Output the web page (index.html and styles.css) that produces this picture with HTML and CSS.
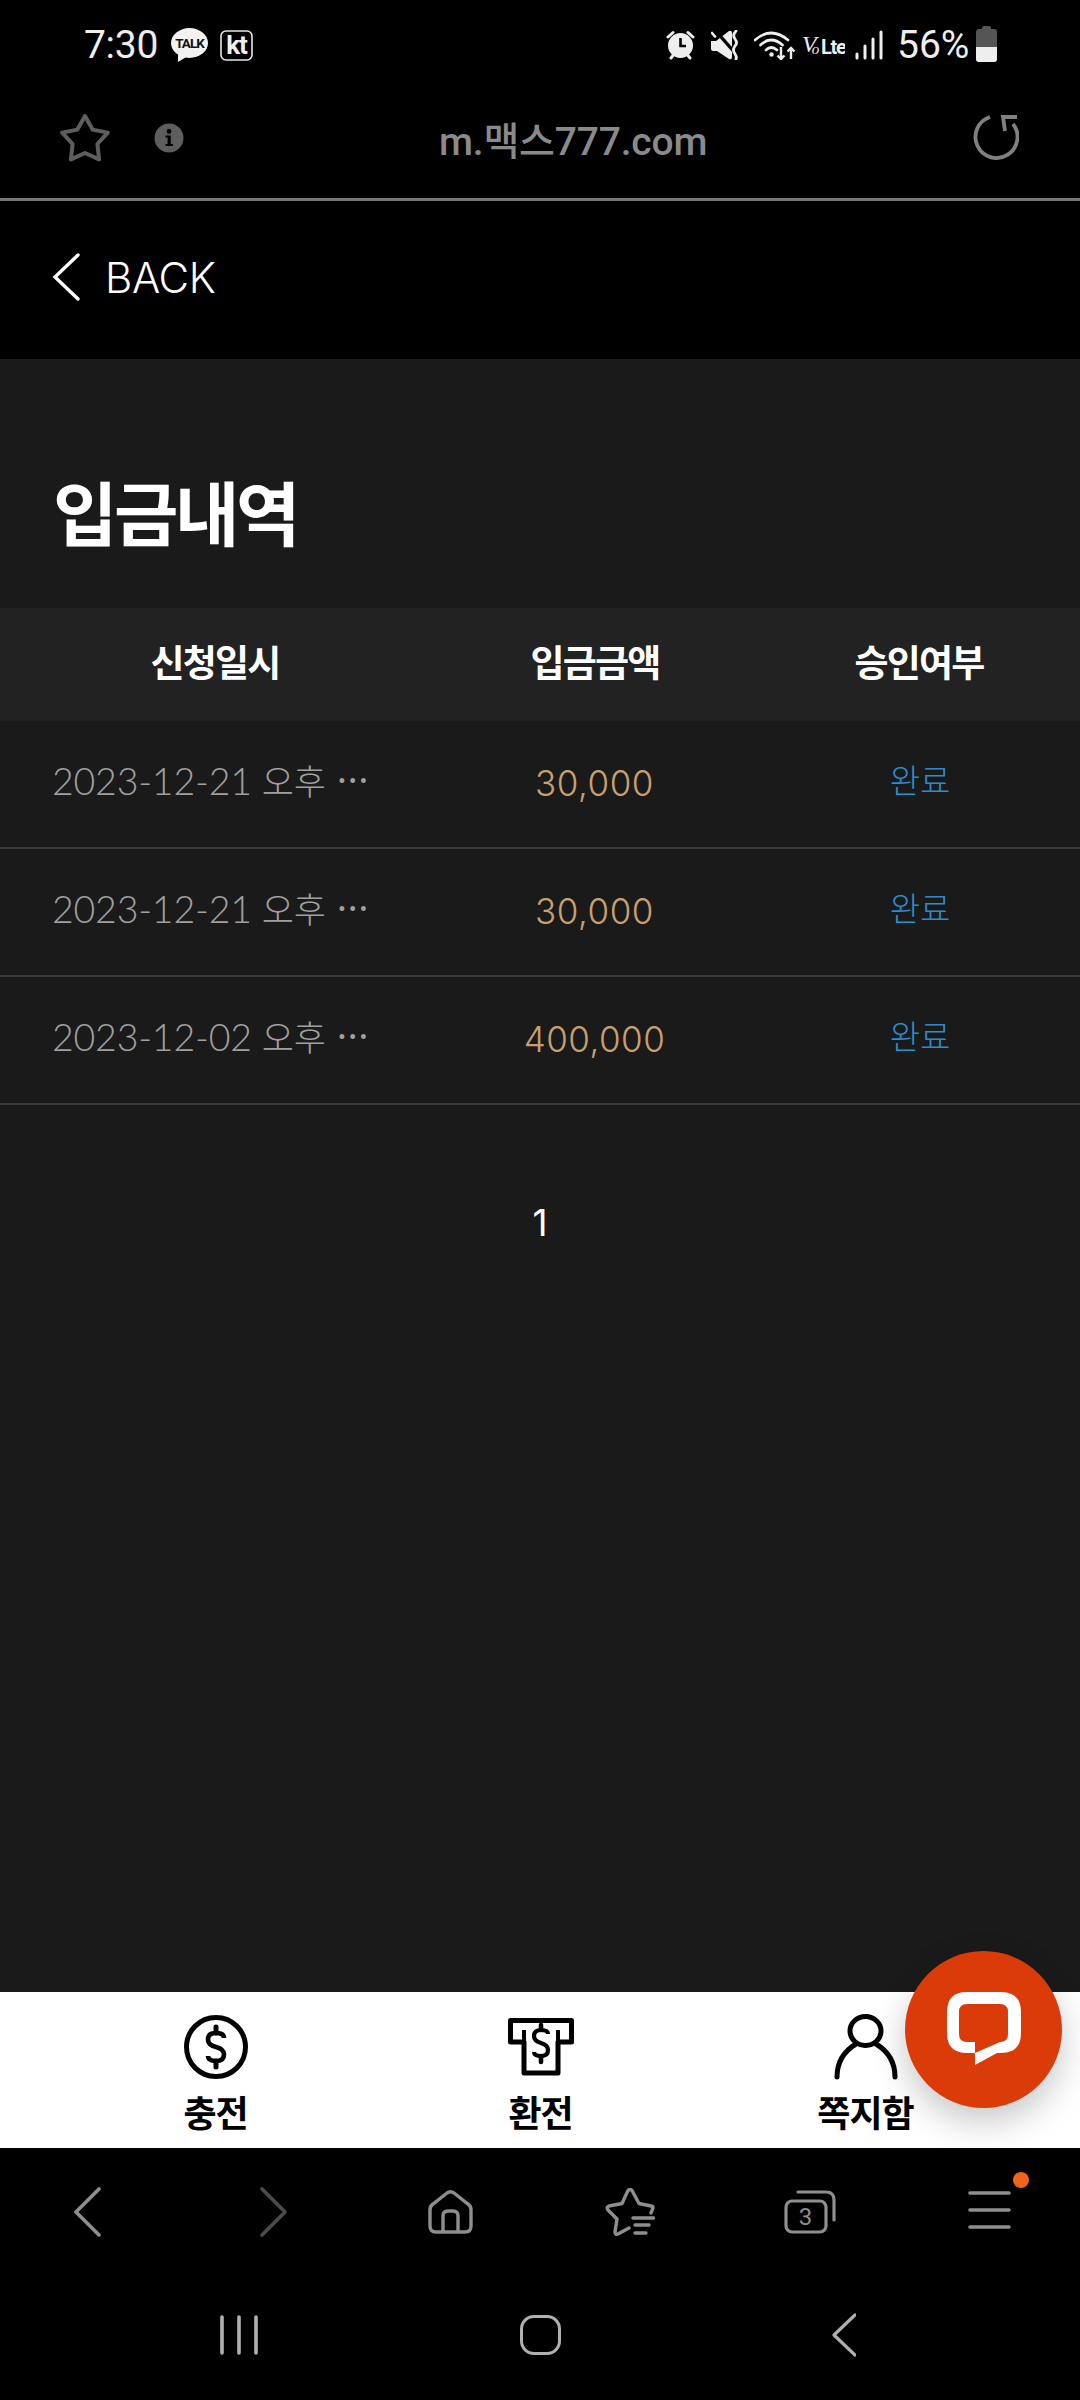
FILE: index.html
```html
<!DOCTYPE html>
<html lang="ko">
<head>
    <meta charset="UTF-8">
    <meta name="viewport" content="width=device-width, initial-scale=1.0">
    <title>입금내역</title>
    <link rel="stylesheet" href="styles.css">
</head>
<body>
<div class="page">

    <!-- phone status bar -->
    <div class="status">
        <span class="clock">7:30</span>
        <svg class="ic-talk" width="37" height="34" viewBox="0 0 37 34">
            <ellipse cx="18.5" cy="15" rx="18.5" ry="15" fill="#f2f2f2"/>
            <path d="M7 25 L7 34 L17 28 Z" fill="#f2f2f2"/>
            <text x="18.5" y="20" text-anchor="middle" class="talk-txt">TALK</text>
        </svg>
        <svg class="ic-kt" width="33" height="31" viewBox="0 0 33 31">
            <rect x="1" y="1" width="31" height="29" rx="5" fill="none" stroke="#e8e8e8" stroke-width="1.6"/>
            <text x="16.5" y="24" text-anchor="middle" class="kt-txt">kt</text>
        </svg>
        <div class="status-right">
            <svg width="29" height="30" viewBox="0 0 29 30">
                <circle cx="14.5" cy="15.5" r="12.5" fill="#eee"/>
                <path d="M14.5 8 V16 H20" fill="none" stroke="#000" stroke-width="2.6"/>
                <path d="M2 7 L7 2.5 M27 7 L22 2.5 M5 28 L7 25.5 M24 28 L22 25.5" stroke="#eee" stroke-width="3" stroke-linecap="round"/>
            </svg>
            <svg class="ic-mute" width="29" height="30" viewBox="0 0 29 30">
                <path d="M0 11 H5 L18 1 Q21 0 21 3 V27 Q21 30 18 29 L6 21 H2 Q0 21 0 19 Z" fill="#eee"/>
                <path d="M3 -1 L25 24" stroke="#000" stroke-width="3.4"/>
                <path d="M1 3 L4 6.5" stroke="#eee" stroke-width="2.6" stroke-linecap="round"/>
                <path d="M25 1 Q21 5 24 9 Q27 13 24 16 Q21 20 24 24 Q26 27 25 29" fill="none" stroke="#eee" stroke-width="2.8" stroke-linecap="round"/>
            </svg>
            <svg class="ic-wifi" width="42" height="30" viewBox="0 0 42 30">
                <path d="M1 10 Q17 -4 34 10 M6.5 15 Q17 5 28.5 15 M12 20 Q17 15 23 20" fill="none" stroke="#eee" stroke-width="2.7" stroke-linecap="round"/>
                <circle cx="17.5" cy="24.5" r="2.2" fill="#eee"/>
                <path d="M27 17 V29 M23.5 25.5 L27 29 L30.5 25.5 M37 29 V18 M33.5 21.5 L37 18 L40.5 21.5" fill="none" stroke="#eee" stroke-width="2.4"/>
            </svg>
            <svg class="ic-volte" width="43" height="34" viewBox="0 0 43 34">
                <text x="0" y="24" class="vo-txt">V<tspan class="vo-small" dx="-5" dy="2">o</tspan><tspan class="lte-txt" x="19">Lte</tspan></text>
            </svg>
            <svg class="ic-signal" width="28" height="30" viewBox="0 0 28 30">
                <path d="M2 28 V24 M10 28 V16 M18 28 V9 M26 28 V2" stroke="#eee" stroke-width="3" stroke-linecap="round"/>
            </svg>
            <span class="battery-pct">56%</span>
            <div class="battery"><div class="battery-level"></div></div>
        </div>
    </div>

    <!-- browser url bar -->
    <div class="urlbar">
        <svg class="ic-star" width="50" height="50" viewBox="0 0 50 50">
            <path d="M25 3 L32.6 16.6 L47.8 19.6 L37.4 31 L39.1 46.4 L25 40 L10.9 46.4 L12.6 31 L2.2 19.6 L17.4 16.6 Z" fill="none" stroke="#5e5e5e" stroke-width="4" stroke-linejoin="round"/>
        </svg>
        <svg class="ic-info" width="30" height="30" viewBox="0 0 30 30">
            <circle cx="15" cy="15" r="14.5" fill="#5e5e5e"/>
            <circle cx="15" cy="8.5" r="2.4" fill="#000"/>
            <path d="M11.5 12.5 H16.8 V21 H19 V23 H11.5 V21 H13.6 V14.5 H11.5 Z" fill="#000"/>
        </svg>
        <span class="url">m.맥스777.com</span>
        <svg class="ic-reload" width="47" height="46" viewBox="0 0 47 46">
            <path d="M18 2 A21 21 0 1 0 41 9" fill="none" stroke="#808080" stroke-width="3.8"/>
            <path d="M45 2 H31 L33 16" fill="none" stroke="#808080" stroke-width="3.8"/>
        </svg>
    </div>

    <div class="backbar">
        <svg width="28" height="48" viewBox="0 0 28 48">
            <path d="M26 2 L3 24 L26 46" fill="none" stroke="#fff" stroke-width="3.4" stroke-linecap="round"/>
        </svg>
        <span class="back-label">BACK</span>
    </div>

    <div class="content">
        <h1 class="title">입금내역</h1>

        <table class="history">
            <thead>
                <tr>
                    <th class="col-date">신청일시</th>
                    <th class="col-amount">입금금액</th>
                    <th class="col-state">승인여부</th>
                </tr>
            </thead>
            <tbody>
                <tr>
                    <td class="date">2023-12-21 <span class="ko">오후</span> <span class="more">···</span></td>
                    <td class="amount">30,000</td>
                    <td class="state">완료</td>
                </tr>
                <tr>
                    <td class="date">2023-12-21 <span class="ko">오후</span> <span class="more">···</span></td>
                    <td class="amount">30,000</td>
                    <td class="state">완료</td>
                </tr>
                <tr>
                    <td class="date">2023-12-02 <span class="ko">오후</span> <span class="more">···</span></td>
                    <td class="amount">400,000</td>
                    <td class="state">완료</td>
                </tr>
            </tbody>
        </table>

        <div class="pager">1</div>
    </div>

    <!-- site bottom menu -->
    <div class="tabbar">
        <div class="tab">
            <svg width="66" height="66" viewBox="0 0 66 66">
                <circle cx="33" cy="33" r="29.5" fill="none" stroke="#000" stroke-width="5"/>
                <path d="M41 24 Q41 19 33 19 Q25 19 25 25.5 Q25 31 33 33 Q41 35 41 40.5 Q41 47 33 47 Q25 47 25 42" fill="none" stroke="#000" stroke-width="4.6"/>
                <path d="M33 13 V19 M33 47 V53" stroke="#000" stroke-width="5" stroke-linecap="round"/>
            </svg>
            <span class="tab-label">충전</span>
        </div>
        <div class="tab">
            <svg class="ic-atm" width="66" height="60" viewBox="0 0 66 60">
                <path d="M2.5 2.5 H63.5 V24 H50 V55 H16 V24 H2.5 Z" fill="none" stroke="#000" stroke-width="5" stroke-linejoin="round"/>
                <path d="M16 12 V24 M50 12 V24" stroke="#000" stroke-width="4"/>
                <path d="M40 16 Q40 12 33 12 Q26 12 26 18 Q26 23 33 25 Q40 27 40 32 Q40 38 33 38 Q26 38 26 34" fill="none" stroke="#000" stroke-width="4.2"/>
                <path d="M33 7 V12 M33 38 V44" stroke="#000" stroke-width="4.6" stroke-linecap="round"/>
            </svg>
            <span class="tab-label">환전</span>
        </div>
        <div class="tab">
            <svg width="68" height="66" viewBox="0 0 68 66">
                <ellipse cx="33.5" cy="17" rx="15.5" ry="14.5" fill="none" stroke="#000" stroke-width="5"/>
                <path d="M5 63 C5 46 14 36 24 30 M63 63 C63 46 54 36 44 30" fill="none" stroke="#000" stroke-width="5" stroke-linecap="round"/>
            </svg>
            <span class="tab-label">쪽지함</span>
        </div>
    </div>

    <!-- browser toolbar -->
    <div class="toolbar">
        <svg width="50" height="50" viewBox="0 0 50 50">
            <path d="M34 2 L11 25 L34 48" fill="none" stroke="#8e8e8e" stroke-width="3.6" stroke-linecap="round" stroke-linejoin="round"/>
        </svg>
        <svg width="50" height="50" viewBox="0 0 50 50">
            <path d="M17 2 L40 25 L17 48" fill="none" stroke="#4c4c4c" stroke-width="3.6" stroke-linecap="round" stroke-linejoin="round"/>
        </svg>
        <svg width="45" height="44" viewBox="0 0 45 44">
            <path d="M2 36 V20 Q2 16 5 14 L19 3 Q22.5 0.5 26 3 L40 14 Q43 16 43 20 V36 Q43 42 37 42 H8 Q2 42 2 36 Z" fill="none" stroke="#8e8e8e" stroke-width="3.4"/>
            <path d="M15 42 V26 Q15 21 20 21 H25 Q30 21 30 26 V42" fill="none" stroke="#8e8e8e" stroke-width="3.4"/>
        </svg>
        <svg width="50" height="48" viewBox="0 0 50 48">
            <path d="M46 25 L48 20 Q48 18 46 18 L34 15.5 L27 2.5 Q25 0.5 23 2.5 L17 15.5 L4 18 Q1 19 3 22 L12 31 L10 44 Q10 47 13 46 L24 40" fill="none" stroke="#8e8e8e" stroke-width="3.4" stroke-linecap="round" stroke-linejoin="round"/>
            <path d="M28 30 H48.5 M30 37 H44 M30 45 H41" stroke="#8e8e8e" stroke-width="3.4" stroke-linecap="round"/>
        </svg>
        <svg width="52" height="44" viewBox="0 0 52 44">
            <rect x="2" y="11" width="40" height="31" rx="6" fill="none" stroke="#8e8e8e" stroke-width="3.2"/>
            <path d="M14 2 H42 Q50 2 50 10 V30" fill="none" stroke="#8e8e8e" stroke-width="3.2" stroke-linecap="round"/>
            <text x="21.5" y="35" text-anchor="middle" class="tabs-count">3</text>
        </svg>
        <svg width="80" height="80" viewBox="0 0 80 80">
            <path d="M20 21 H59 M20 38 H59 M20 55 H59" stroke="#8e8e8e" stroke-width="3.6" stroke-linecap="round"/>
            <circle cx="71" cy="8" r="8" fill="#f26419"/>
        </svg>
    </div>

    <!-- android nav -->
    <div class="navbar">
        <svg width="38" height="40" viewBox="0 0 38 40">
            <path d="M2 2 V38 M19 2 V38 M36 2 V38" stroke="#b0b0b0" stroke-width="3.6" stroke-linecap="round"/>
        </svg>
        <div class="nav-home"></div>
        <svg width="33" height="44" viewBox="0 0 33 44">
            <path d="M32 2 L11 22 L32 42" fill="none" stroke="#b0b0b0" stroke-width="3.2" stroke-linecap="round" stroke-linejoin="round"/>
        </svg>
    </div>

    <!-- floating chat button -->
    <div class="chat">
        <svg width="74" height="73" viewBox="0 0 74 73">
            <path fill="#fff" fill-rule="evenodd" d="M20 0 H54 Q74 0 74 20 V41 Q74 61 54 61 H50 L28 73 V61 H20 Q0 61 0 41 V20 Q0 0 20 0 Z M20 12 Q12 12 12 20 V42 Q12 50 20 50 H28 V61 L53 50 H53 Q61 50 61 42 V20 Q61 12 53 12 Z"/>
        </svg>
    </div>
</div>
</body>
</html>
```

FILE: styles.css
```css
* {
    box-sizing: border-box;
}

html, body {
    margin: 0;
    padding: 0;
    background-color: #000;
}

body {
    font-family: "Noto Sans CJK KR", "Noto Sans", sans-serif;
}

svg {
    display: block;
    flex: none;
}

.page {
    position: relative;
    display: flex;
    flex-direction: column;
    width: 1080px;
    height: 2400px;
    overflow: hidden;
}

/* status bar */
.status {
    display: flex;
    align-items: center;
    height: 90px;
    padding-left: 84px;
    color: #eee;
}

.clock {
    font-family: Roboto, sans-serif;
    font-size: 39px;
    letter-spacing: -0.3px;
    width: 87px;
}

.ic-kt {
    margin-left: 12px;
}

.talk-txt {
    font-family: "Roboto", sans-serif;
    font-size: 13.5px;
    font-weight: 700;
    letter-spacing: -1px;
    fill: #111;
}

.kt-txt {
    font-family: "Roboto", sans-serif;
    font-size: 26px;
    font-weight: 700;
    letter-spacing: -1px;
    fill: #eee;
}

.status-right {
    display: flex;
    align-items: center;
    margin-left: auto;
    margin-right: 83px;
}

.ic-mute {
    margin-left: 16px;
}

.ic-wifi {
    margin-left: 14px;
}

.ic-volte {
    margin-left: 6px;
}

.ic-signal {
    margin-left: 10px;
}

.vo-txt {
    font-family: "Liberation Serif", serif;
    font-style: italic;
    font-size: 24px;
    fill: #eee;
}

.vo-small {
    font-size: 15px;
}

.lte-txt {
    font-family: Roboto, sans-serif;
    font-style: normal;
    font-size: 20px;
    font-weight: 700;
    letter-spacing: -1.3px;
    fill: #eee;
}

.battery-pct {
    font-family: Roboto, sans-serif;
    font-size: 39px;
    margin-left: 14px;
    width: 79px;
}

.battery {
    position: relative;
    width: 21px;
    height: 33px;
    border-radius: 3px;
    background-color: #555;
    overflow: visible;
}

.battery::before {
    content: "";
    position: absolute;
    top: -3px;
    left: 6px;
    width: 9px;
    height: 4px;
    border-radius: 2px 2px 0 0;
    background-color: #555;
}

.battery-level {
    position: absolute;
    left: 0;
    right: 0;
    bottom: 0;
    height: 15px;
    border-radius: 0 0 3px 3px;
    background-color: #eee;
}

/* url bar */
.urlbar {
    display: flex;
    align-items: center;
    height: 111px;
    padding: 0 61px 12px 60px;
    border-bottom: 3px solid #777;
}

.ic-info {
    margin-left: 44px;
}

.url {
    margin-left: 255px;
    font-family: Roboto, "Noto Sans CJK KR", sans-serif;
    font-size: 39px;
    font-weight: 500;
    letter-spacing: -0.2px;
    color: #8a8a8a;
}

.ic-reload {
    margin-left: auto;
}

.backbar {
    display: flex;
    align-items: center;
    height: 158px;
    padding: 0 0 6px 52px;
}

.back-label {
    margin-left: 25px;
    font-family: Inter, sans-serif;
    font-size: 42px;
    font-weight: 300;
    letter-spacing: -0.4px;
    color: #fff;
}

/* page content */
.content {
    flex: 1;
    background-color: #1a1a1a;
}

.title {
    margin: 0;
    padding: 112px 0 0 53px;
    height: 249px;
    font-size: 70px;
    line-height: 80px;
    font-weight: 700;
    letter-spacing: -3.4px;
    color: #fff;
}

.history {
    width: 100%;
    table-layout: fixed;
    border-collapse: separate;
    border-spacing: 0;
}

.history th {
    height: 113px;
    padding: 0 2px 8px 0;
    background-color: #222;
    font-size: 37px;
    font-weight: 700;
    letter-spacing: -1.8px;
    color: #fff;
    text-align: center;
}

.col-date {
    width: 432px;
}

.col-amount {
    width: 328px;
}

.history td {
    height: 128px;
    padding: 0 0 10px;
    border-bottom: 2px solid #3a3a3a;
    vertical-align: middle;
}

.history td.date {
    padding-left: 52px;
    font-family: Lato, sans-serif;
    font-size: 37.5px;
    font-weight: 300;
    letter-spacing: -0.2px;
    color: #a0a0a0;
    white-space: nowrap;
}

.ko {
    font-family: "Noto Sans CJK KR", sans-serif;
    font-size: 35px;
    font-weight: 300;
}

.more {
    margin-left: 2px;
    font-size: 32px;
    font-weight: 400;
    letter-spacing: 2.5px;
    vertical-align: 5px;
}

.history td.amount {
    padding: 0 3px 2px 0;
    font-family: Inter, sans-serif;
    font-size: 35px;
    font-weight: 300;
    letter-spacing: 0.5px;
    color: #c8a070;
    text-align: center;
}

.history td.state {
    font-size: 33px;
    font-weight: 300;
    color: #2f8ccc;
    text-align: center;
}

.pager {
    margin-top: 95px;
    font-family: Inter, sans-serif;
    font-size: 37px;
    line-height: 46px;
    color: #fff;
    text-align: center;
}

/* bottom menu */
.tabbar {
    display: grid;
    grid-template-columns: repeat(3, 1fr);
    height: 156px;
    padding: 22px 52px 0 53px;
    background-color: #fff;
}

.tab {
    display: flex;
    flex-direction: column;
    align-items: center;
}

.ic-atm {
    margin: 4px 0 2px;
}

.tab-label {
    margin-top: 9px;
    font-size: 36px;
    line-height: 44px;
    font-weight: 700;
    letter-spacing: -1px;
    color: #000;
}

/* browser toolbar */
.toolbar {
    display: grid;
    grid-template-columns: repeat(6, 1fr);
    align-items: center;
    justify-items: center;
    height: 142px;
    padding-bottom: 14px;
    background-color: #000;
}

.tabs-count {
    font-family: Roboto, sans-serif;
    font-size: 24px;
    fill: #8e8e8e;
}

/* android nav */
.navbar {
    display: flex;
    align-items: center;
    gap: 262px;
    height: 110px;
    padding: 0 0 20px 220px;
    background-color: #000;
}

.nav-home {
    width: 41px;
    height: 40px;
    border: 3.4px solid #b0b0b0;
    border-radius: 14px;
}

/* chat button */
.chat {
    position: absolute;
    left: 905px;
    top: 1951px;
    display: flex;
    align-items: center;
    justify-content: center;
    width: 157px;
    height: 157px;
    padding-bottom: 2px;
    border-radius: 50%;
    background-color: #da3b08;
    box-shadow: 0 14px 34px rgba(0, 0, 0, 0.22);
}
```
